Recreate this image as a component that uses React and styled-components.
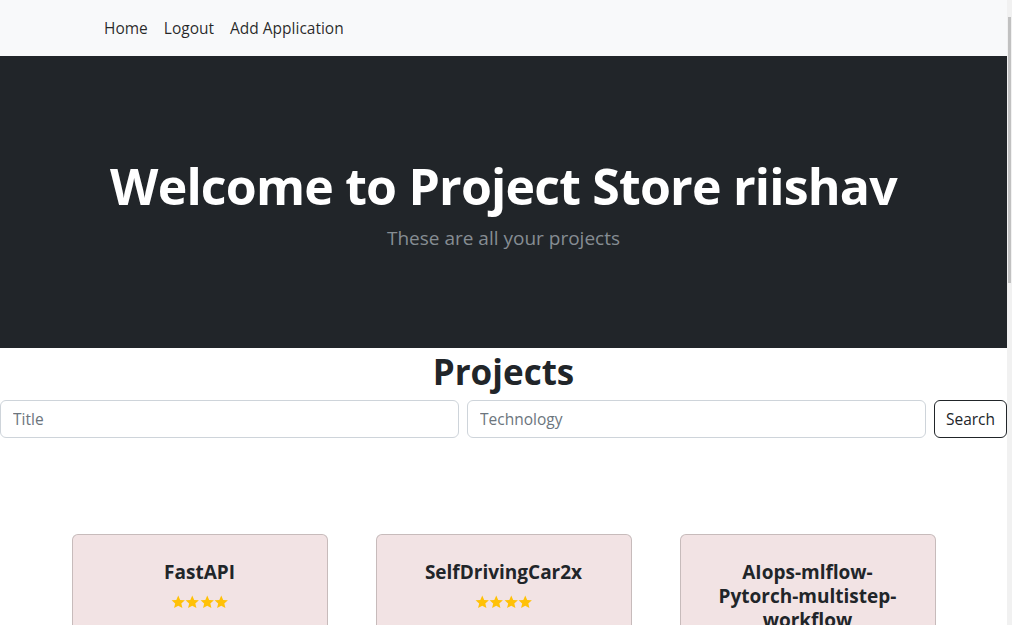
import styled, { createGlobalStyle } from 'styled-components';

const GlobalStyle = createGlobalStyle`
    body {
        margin: 0 5px 0 0;
        font-family: 'Open Sans', 'Noto Sans', sans-serif;
        color: #212529;
        background: #fff;
    }
    * {
        box-sizing: border-box;
    }
`;

const ScrollTrack = styled.div`
    position: fixed;
    top: 0;
    right: 0;
    width: 5px;
    height: 100vh;
    background: #f1f1f1;
    padding: 17px 1px 0;
`;

const ScrollThumb = styled.div`
    height: 266px;
    background: #c1c1c1;
`;

const Navbar = styled.nav`
    height: 56px;
    background-color: #f8f9fa;
    display: flex;
    align-items: center;
    padding-left: 96px;
`;

const NavLink = styled.a`
    padding: 0 8px;
    font-size: 15.5px;
    color: rgba(0, 0, 0, 0.85);
    text-decoration: none;
    cursor: pointer;
`;

const Hero = styled.header`
    background-color: #212529;
    padding: 95px 0;
    text-align: center;
`;

const HeroTitle = styled.h1`
    margin: 0;
    font-size: 50px;
    line-height: 70px;
    font-weight: 700;
    color: #fff;
    letter-spacing: -0.8px;
`;

const Lead = styled.p`
    margin: 2px 0 0;
    font-size: 19px;
    line-height: 30px;
    color: #868d93;
`;

const SectionTitle = styled.h2`
    margin: 2px 0 0;
    text-align: center;
    font-size: 35px;
    line-height: 44px;
    font-weight: 700;
`;

const SearchBar = styled.form`
    display: flex;
    gap: 8px;
    margin-top: 6px;
`;

const Input = styled.input`
    flex: 1;
    min-width: 0;
    height: 38px;
    padding: 6px 12px;
    font-family: inherit;
    font-size: 15.5px;
    color: #212529;
    border: 1px solid #ced4da;
    border-radius: 6px;
    outline: none;

    &::placeholder {
        color: #6c757d;
    }
`;

const SearchButton = styled.button`
    width: 73px;
    height: 38px;
    font-family: inherit;
    font-size: 15.5px;
    color: #212529;
    background: #fff;
    border: 1px solid #212529;
    border-radius: 6px;
    cursor: pointer;
`;

const Grid = styled.section`
    display: grid;
    grid-template-columns: repeat(3, 256px);
    justify-content: center;
    column-gap: 48px;
    row-gap: 48px;
    margin-top: 96px;
    padding-bottom: 120px;
`;

const Card = styled.article`
    background-color: #f2e3e4;
    border: 1px solid rgba(0, 0, 0, 0.175);
    border-radius: 6px;
    padding: 25px 24px 24px;
    text-align: center;
    min-height: 360px;
`;

const CardTitle = styled.h5`
    margin: 0 0 6px;
    font-size: 19px;
    line-height: 24px;
    font-weight: 700;
`;

const Stars = styled.div`
    display: flex;
    justify-content: center;
    height: 24px;
    align-items: center;
`;

function Star() {
    return (
        <svg width="14.5" height="14.5" viewBox="0 0 24 24" fill="#ffc107">
            <path d="M12 1l3.2 7.1 7.8.7-5.9 5.1 1.8 7.7L12 17.6l-6.9 4 1.8-7.7L1 8.8l7.8-.7z" />
        </svg>
    );
}

const projects = [
    { title: 'FastAPI', rating: 4 },
    { title: 'SelfDrivingCar2x', rating: 4 },
    { title: 'AIops-mlflow-Pytorch-multistep-workflow', rating: 4 },
];

export default function App() {
    return (
        <>
            <GlobalStyle />
            <Navbar>
                <NavLink>Home</NavLink>
                <NavLink>Logout</NavLink>
                <NavLink>Add Application</NavLink>
            </Navbar>
            <Hero>
                <HeroTitle>Welcome to Project Store riishav</HeroTitle>
                <Lead>These are all your projects</Lead>
            </Hero>
            <SectionTitle>Projects</SectionTitle>
            <SearchBar onSubmit={(e) => e.preventDefault()}>
                <Input placeholder="Title" />
                <Input placeholder="Technology" />
                <SearchButton type="submit">Search</SearchButton>
            </SearchBar>
            <Grid>
                {projects.map((p) => (
                    <Card key={p.title}>
                        <CardTitle>{p.title}</CardTitle>
                        <Stars>
                            {Array.from({ length: p.rating }).map((_, i) => (
                                <Star key={i} />
                            ))}
                        </Stars>
                    </Card>
                ))}
            </Grid>
            <ScrollTrack>
                <ScrollThumb />
            </ScrollTrack>
        </>
    );
}
